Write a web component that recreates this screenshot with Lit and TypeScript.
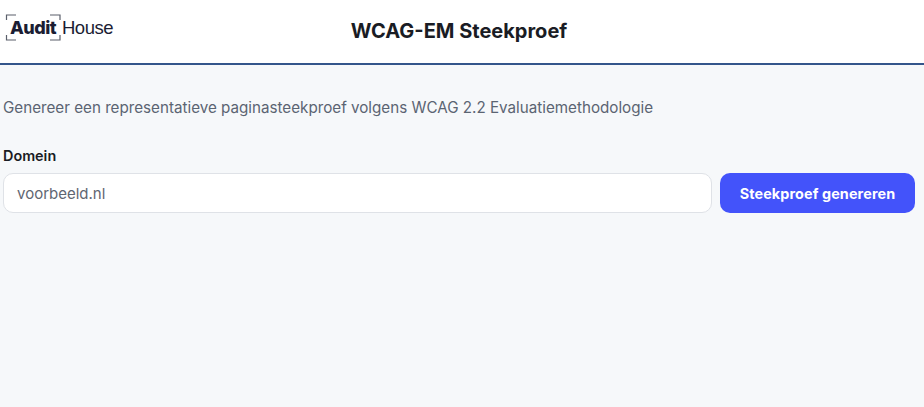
import { LitElement, html, css } from "lit";
import { customElement } from "lit/decorators.js";

@customElement("app-root")
export class AppRoot extends LitElement {
  static styles = css`
    :host {
      display: block;
      min-height: 407px;
      background: #f6f8fa;
      font-family: Inter, "Liberation Sans", sans-serif;
      color: #1a1c28;
    }
    * { box-sizing: border-box; }
    header {
      height: 65px;
      background: #fff;
      border-bottom: 2px solid #34558b;
      display: grid;
      grid-template-columns: 1fr auto 1fr;
      align-items: start;
      padding-right: 6px;
    }
    .logo {
      display: flex;
      align-items: center;
      padding: 14px 0 0 5px;
    }
    .mark {
      position: relative;
      width: 56px;
      height: 27px;
      display: flex;
      align-items: center;
      justify-content: center;
      font-size: 18px;
      font-weight: 800;
      letter-spacing: -0.5px;
      color: #1b1d33;
    }
    .mark svg { position: absolute; inset: 0; }
    .house {
      font-family: "Liberation Sans", sans-serif;
      font-size: 18.5px;
      letter-spacing: -0.5px;
      margin-left: 1px;
      color: #1b1d33;
    }
    h1 {
      margin: 0;
      padding-top: 19px;
      font-size: 20px;
      line-height: 24px;
      font-weight: 700;
      color: #1a1c24;
    }
    main { padding: 34px 9px 0 3px; }
    .desc {
      margin: 0;
      font-size: 15.2px;
      line-height: 18px;
      color: #5b6472;
    }
    label {
      display: block;
      margin-top: 30px;
      font-size: 14.4px;
      line-height: 17px;
      font-weight: 600;
      color: #1a1c24;
    }
    .row {
      display: flex;
      gap: 8px;
      margin-top: 9px;
    }
    .input {
      flex: 1;
      height: 40px;
      background: #fff;
      border: 1px solid #dfe2e7;
      border-radius: 10px;
      padding: 0 13px;
      display: flex;
      align-items: center;
      font-size: 15px;
      color: #5f6672;
    }
    button {
      width: 195px;
      height: 40px;
      border: 0;
      border-radius: 10px;
      background: #4353fa;
      color: #fff;
      letter-spacing: 0.1px;
      font: 700 14.4px Inter, "Liberation Sans", sans-serif;
    }
  `;

  render() {
    return html`
      <header>
        <div class="logo">
          <div class="mark">
            <svg viewBox="0 0 56 27" width="56" height="27" fill="none" stroke="#5a5f6b" stroke-width="1.2">
              <path d="M1.5 6V1H11M45 1H55V6M1.5 21V26H11M45 26H55V21"></path>
            </svg>
            Audit
          </div>
          <span class="house">House</span>
        </div>
        <h1>WCAG-EM Steekproef</h1>
        <div></div>
      </header>
      <main>
        <p class="desc">Genereer een representatieve paginasteekproef volgens WCAG 2.2 Evaluatiemethodologie</p>
        <label>Domein</label>
        <div class="row">
          <div class="input">voorbeeld.nl</div>
          <button>Steekproef genereren</button>
        </div>
      </main>
    `;
  }
}
